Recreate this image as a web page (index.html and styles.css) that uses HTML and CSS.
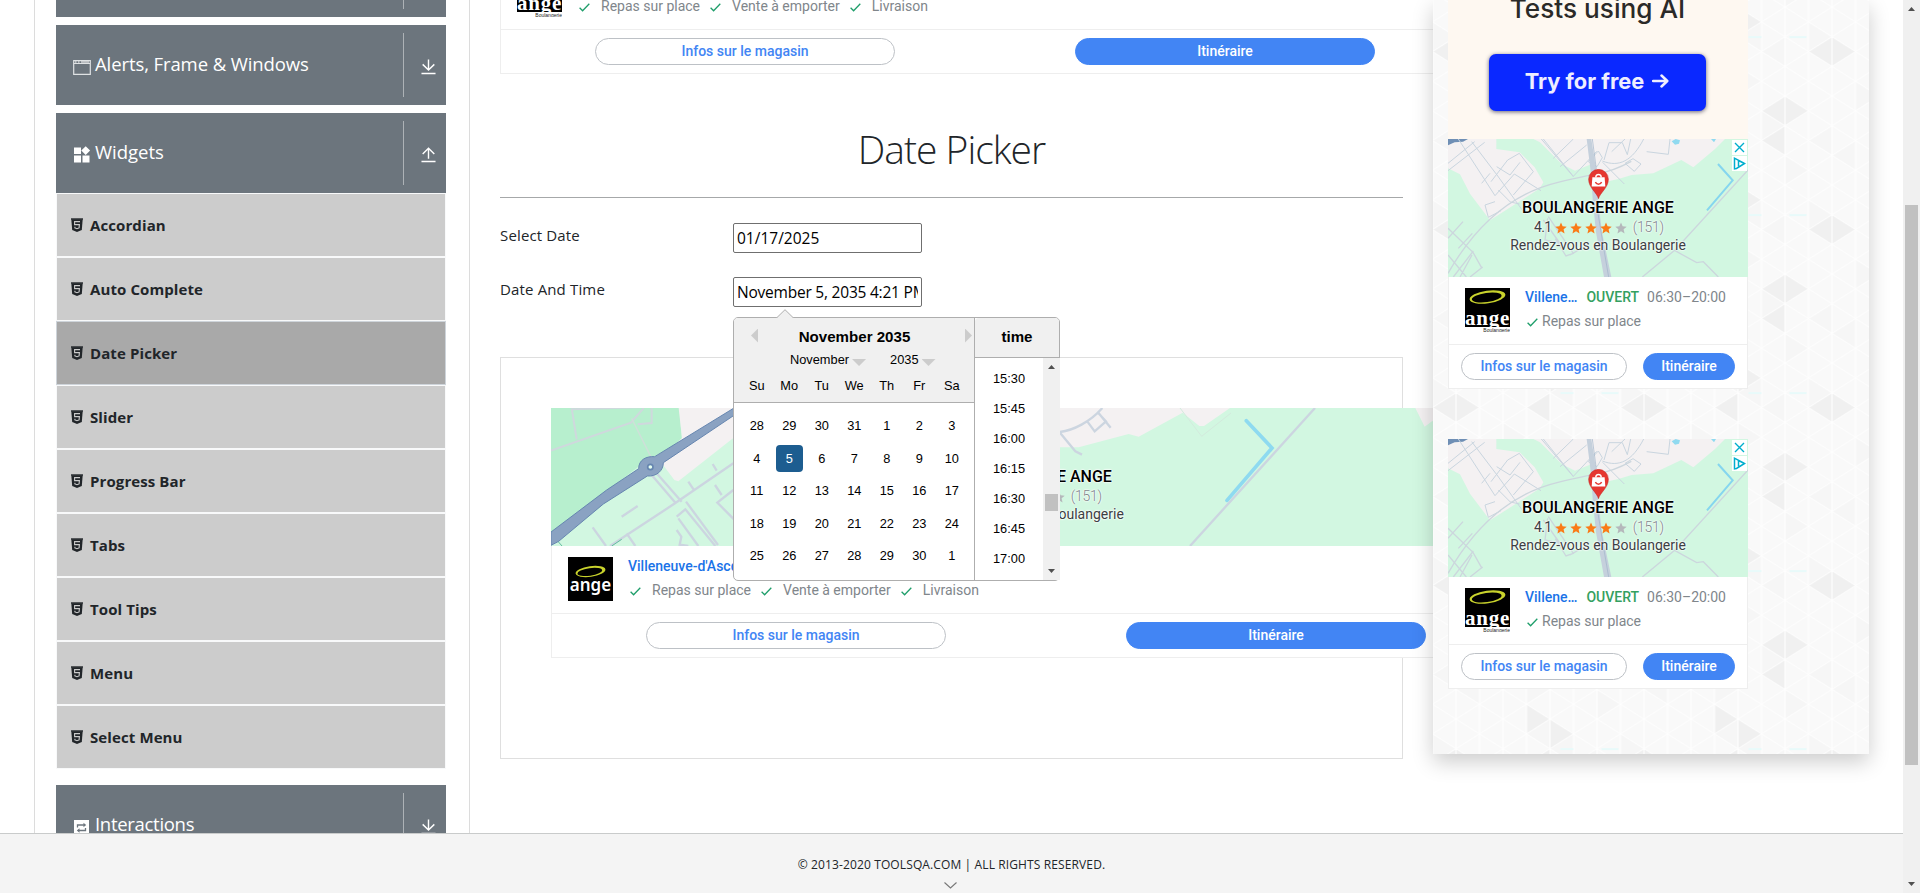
FILE: index.html
```html
<!DOCTYPE html>
<html lang="en">
<head>
<meta charset="utf-8">
<title>Date Picker</title>
<link rel="stylesheet" href="styles.css">
</head>
<body>
<svg class="defs" width="0" height="0" aria-hidden="true">
  <symbol id="html5" viewBox="0 0 12 14"><path fill="currentColor" fill-opacity=".7" d="M0 0h12v2H0z"/><path fill="currentColor" d="M.3 1.2h11.4L10.8 12 6 14 1.200 12z"/><path d="M9 3.600H3.600v3H8.400L8.100 9.900 6 10.700 3.900 9.900V8.800" fill="none" stroke="#ccc" stroke-width="1.100"/></symbol>
  <symbol id="down" viewBox="0 0 16 16"><path d="M8 0v11M1.800 5.200 8 11.300l6.200-6.100M.5 15h15" fill="none" stroke="#fff" stroke-width="1.500"/></symbol>
  <symbol id="up" viewBox="0 0 16 16"><path d="M8 12V1M1.800 7 8 .9 14.200 7M.5 15h15" fill="none" stroke="#fff" stroke-width="1.500"/></symbol>
  <symbol id="check" viewBox="0 0 11 9"><path d="M.6 4.700 3.600 7.700 10.300.8" fill="none" stroke="#1e9e6a" stroke-width="1.300"/></symbol>
  <symbol id="star" viewBox="0 0 24 24"><path fill="currentColor" d="M12 1l3.200 7.600 8.300.7-6.300 5.400 1.900 8.100L12 18.500l-7.100 4.300 1.900-8.100L.5 9.300l8.300-.7z"/></symbol>
  <symbol id="ring" viewBox="0 0 38 16"><g transform="rotate(-8 19 8)"><ellipse cx="19" cy="8" rx="18.500" ry="6.500" fill="#c9d32c"/><ellipse cx="18.100" cy="8.400" rx="15.400" ry="4.700" fill="#000"/></g></symbol>
  <symbol id="pin" viewBox="0 0 60 88"><path fill="#e53730" stroke="#c5221f" stroke-width="1.500" d="M30 87C26 70 1 55 1 30a29 29 0 0 1 58 0C59 55 34 70 30 87z"/><path fill="#fff" d="M12 24h36l2 27H10z"/><path d="M22 25c0-12 16-12 16 0" fill="none" stroke="#fff" stroke-width="4"/><path d="M21 38c3 9 15 9 18 0" fill="none" stroke="#e53730" stroke-width="4"/></symbol>
  <symbol id="town" viewBox="84 417 900 414">
    <path fill="#d2f7e1" d="M84 417h900v414H84z"/>
    <path fill="#f4f1f2" d="M84 505L84 430l60-13h85v30l70 10 45 45 26 45-10 18-150 96-60-80-30-58zM340 417h575l-30 30-65 55-36-22-84 40-65 5-40 12-30 7-55-50-45 18-40-20-65-65z"/>
    <path fill="#6f8fb5" d="M84 417h60l-15 8-25 2-20 9z"/>
    <path fill="#90daf0" d="M755 424l12-7 13 4-3 10-12 3zM873 417h15l-6 10z"/>
    <g fill="none" stroke="#c9d5df" stroke-width="3">
      <path d="M84 490l80-65M84 512l110-85M155 425l76 100 85 118M115 417l110 170M225 587l58-65 80 50M213 545l50-65 35-20 42 55-60 70M230 500l40 25 30-38M185 550l25-30M235 570l36 36 28 6M225 605l-30 10 10 37 38-20M370 417l90 112 70-75M460 530l-96-113M420 500l80-65M400 475l60-58M505 485l30-32 12 20-16 27zM552 480l15-52h40l15 36 10-47M575 455l40-38M548 487l65 65M547 483c50 20 90 0 124-66M615 490l28 24 20-22-24-16zM680 455l65 8 5-46"/>
    </g>
    <g fill="none" stroke="#ccd6dd" stroke-width="4"><path d="M84 820c80-140 190-240 330-273 50-12 80-18 120-27 40-5 70-20 100-36"/><path d="M984 510L765 750l-98 81M765 752l65 36 20-3 45 46M84 685l75 72 27 48M84 715l45-50M115 745l42-45M120 831l36-66M100 831l60-78M150 831l38-30M84 765l55 66M370 660l50 70-45-10 8-65M385 650l75 110-22 8-32-52M450 765l38-22"/></g>
    <path fill="#c5d0dc" d="M500 417h14l14 90 6 90 12 100 28 134h-22l-24-134-10-100-5-75z"/>
    <path d="M534 640l18 110 14 81M517 417l12 90" fill="none" stroke="#9fb3c8" stroke-width="2"/>
    <path d="M894 492l44 49-77 90" fill="none" stroke="#85d6ef" stroke-width="6"/>
  </symbol>
  <symbol id="region" viewBox="213 324 2910 414">
    <path fill="#d2f7e1" d="M213 324h2910v414H213z"/>
    <path fill="#b7efce" d="M213 324h385l8 100-110 60-283 220z"/>
    <path fill="#f4f1f2" d="M596 324h400l-100 20-136 70-165 130-12-4-45-60 68-66zM1740 324h510l-78 54h-14l-50-40-132 72-30-8-150 40h-60zM2806 324h200l-150 40-22 16z"/>
    <g fill="none" stroke="#cfd8dd" stroke-width="6"><path d="M213 452l240-84 38-44M290 418l-15-94M275 328l205-6M515 324v45l-42 4"/></g>
    <path d="M455 355l60 120" fill="none" stroke="#cfdfd9" stroke-width="4"/>
    <g fill="none" stroke="#ccd5e0" stroke-width="7"><path d="M760 490L585 610 390 738M530 520l75 85M515 525l70 82M425 650l48-32M625 545l16 24M698 492l12 20M705 555l20 30M760 570l-48 38 50 50M338 682l40 56M440 700l26 38M595 655l60 83M590 650l26-22 90 110M618 605l96 130M590 690l14 20-5 24 26 4M2505 324L2130 738M1740 396c40-5 90-30 127-72M1820 362l24 32 34-30-24-26M1855 338l37 45M1740 398l46 56 20 10"/></g>
    <path d="M395 738l30-20M232 722l14 16" stroke="#63bd9f" stroke-width="3"/>
    <path fill="#8aa2c2" stroke="#6686b0" stroke-width="3" d="M213 696L380 570l96-64c0-26 22-38 48-36L762 324h25L762 346 550 488c0 24-20 42-48 40L370 612 236 724l-23 12z"/>
    <circle cx="511" cy="501" r="8" fill="#e5fff0" stroke="#6686b0" stroke-width="5"/>
    <path d="M2100 324l65 85 88-70" fill="none" stroke="#d3eadd" stroke-width="3"/>
    <path d="M2299 362l77 82-135 157" fill="none" stroke="#8edaf0" stroke-width="11" stroke-linecap="round"/>
  </symbol>
</svg>

<div class="page">
  <div class="view">
    <div class="body">
      <nav class="sidebar">
        <div class="head"><span class="head-title"></span><span class="head-toggle"></span></div>
        <div class="head">
          <span class="head-title"><svg class="head-icon" viewBox="0 0 18 18"><path d="M.7 2.700h16.600v13.600H.7zM.7 5.500h16.600" fill="none" stroke="#dfe2e4" stroke-width="1.200"/><path d="M2 4h1.500M5 4h1.500M8 4h8" stroke="#fff" stroke-width="1"/></svg><b class="t-alerts">Alerts, Frame &amp; Windows</b></span>
          <span class="head-toggle"><svg class="arrow"><use href="#down"/></svg></span>
        </div>
        <div class="head open">
          <span class="head-title"><svg class="head-icon" viewBox="0 0 18 18"><path fill="#fff" d="M1 1.500h7V8H1zM1 9.500h7v7H1zM9.500 9.500h7v7h-7zM12.700.2l4.400 4.400-4.400 4.400-4.400-4.400z"/></svg><b class="t-widgets">Widgets</b></span>
          <span class="head-toggle"><svg class="arrow"><use href="#up"/></svg></span>
        </div>
        <ul class="menu">
          <li><svg><use href="#html5"/></svg>Accordian</li>
          <li><svg><use href="#html5"/></svg>Auto Complete</li>
          <li class="active"><svg><use href="#html5"/></svg>Date Picker</li>
          <li><svg><use href="#html5"/></svg>Slider</li>
          <li><svg><use href="#html5"/></svg>Progress Bar</li>
          <li><svg><use href="#html5"/></svg>Tabs</li>
          <li><svg><use href="#html5"/></svg>Tool Tips</li>
          <li><svg><use href="#html5"/></svg>Menu</li>
          <li><svg><use href="#html5"/></svg>Select Menu</li>
        </ul>
        <div class="head">
          <span class="head-title"><svg class="head-icon" viewBox="0 0 18 18"><path fill="#fff" d="M1 2h15v15H1z"/><path d="M4.500 9.500V7h7M12.500 10v2.500h-7" fill="none" stroke="#6c757d" stroke-width="1.300"/><path fill="#6c757d" d="M10.500 4.700 13.200 7l-2.700 2.300zM6.500 10.200 3.800 12.500l2.700 2.300z"/></svg><b class="t-inter">Interactions</b></span>
          <span class="head-toggle"><svg class="arrow"><use href="#down"/></svg></span>
        </div>
      </nav>

      <main class="content">
        <section class="ad wide first">
          <svg class="map"><use href="#region"/></svg>
          <div class="info">
            <div class="logo cut"><svg><use href="#ring"/></svg><span>ange</span><small>Boulangerie</small></div>
            <div class="facts">
              <p class="place"><a>Villeneuve-d'Ascq</a></p>
              <p class="tags"><svg><use href="#check"/></svg><span>Repas sur place</span><svg><use href="#check"/></svg><span>Vente à emporter</span><svg><use href="#check"/></svg><span>Livraison</span></p>
            </div>
          </div>
          <div class="actions"><a class="btn ghost">Infos sur le magasin</a><a class="btn solid">Itinéraire</a></div>
        </section>

        <h1>Date Picker</h1>

        <div class="field"><label>Select Date</label><div class="input i-date">01/17/2025</div></div>
        <div class="field">
          <label class="l-time">Date And Time</label>
          <div class="anchor">
            <div class="input i-time"><span>November 5, 2035 4:21 PM</span></div>
            <div class="picker">
              <svg class="tip" viewBox="0 0 18 9"><path d="M.5 9 9 .7 17.500 9" fill="#f0f0f0" stroke="#aeaeae"/></svg>
              <div class="month">
                <div class="month-head">
                  <div class="current"><i class="prev"></i><strong>November 2035</strong><i class="next"></i></div>
                  <div class="selects"><span>November<i></i></span><span>2035<i></i></span></div>
                  <div class="week"><span>Su</span><span>Mo</span><span>Tu</span><span>We</span><span>Th</span><span>Fr</span><span>Sa</span></div>
                </div>
                <div class="days">
                  <span>28</span><span>29</span><span>30</span><span>31</span><span>1</span><span>2</span><span>3</span>
                  <span>4</span><span class="on"><em>5</em></span><span>6</span><span>7</span><span>8</span><span>9</span><span>10</span>
                  <span>11</span><span>12</span><span>13</span><span>14</span><span>15</span><span>16</span><span>17</span>
                  <span>18</span><span>19</span><span>20</span><span>21</span><span>22</span><span>23</span><span>24</span>
                  <span>25</span><span>26</span><span>27</span><span>28</span><span>29</span><span>30</span><span>1</span>
                </div>
              </div>
              <div class="time">
                <div class="time-head">time</div>
                <div class="time-body">
                  <ul><li>15:30</li><li>15:45</li><li>16:00</li><li>16:15</li><li>16:30</li><li>16:45</li><li>17:00</li></ul>
                  <div class="bar small"><i class="tri-up"></i><i class="thumb"></i><i class="tri-down"></i></div>
                </div>
              </div>
            </div>
          </div>
        </div>

        <div class="frame">
          <section class="ad wide">
            <div class="mapbox">
              <svg class="map"><use href="#region"/></svg>
              <div class="caption">
                <strong>BOULANGERIE ANGE</strong>
                <p class="rating">4.1 <svg><use href="#star"/></svg><svg><use href="#star"/></svg><svg><use href="#star"/></svg><svg><use href="#star"/></svg><svg class="off"><use href="#star"/></svg><small>(151)</small></p>
                <p>Rendez-vous en Boulangerie</p>
              </div>
            </div>
            <div class="info">
              <div class="logo full"><svg><use href="#ring"/></svg><span>ange</span></div>
              <div class="facts">
                <p class="place"><a>Villeneuve-d'Ascq</a></p>
                <p class="tags"><svg><use href="#check"/></svg><span>Repas sur place</span><svg><use href="#check"/></svg><span>Vente à emporter</span><svg><use href="#check"/></svg><span>Livraison</span></p>
              </div>
            </div>
            <div class="actions"><a class="btn ghost">Infos sur le magasin</a><a class="btn solid">Itinéraire</a></div>
          </section>
        </div>
      </main>

      <aside class="rail">
        <svg class="pattern" width="436" height="754">
          <defs>
            <pattern id="tri" width="188" height="178" patternUnits="userSpaceOnUse" patternTransform="translate(-.5 7.100)">
              <path fill="#f9f9f9" d="M0 0h188v178H0z"/>
              <g fill="#f6f6f6"><path d="M0 14.800v29.700L23.500 29.700zM70.500 59.300V89L94 74.200zM117.500 0v29.700L94 14.800zM141 103.800v29.700l23.500-14.800zM23.500 118.700v29.600L0 133.500zM94 133.500v29.700l23.500-14.900zM47 74.200v29.600L70.500 89zM164.500 148.300V178L188 163.200zM47 163.200v-29.700L23.500 148.300zM164.500 29.700v29.600L141 44.500zM117.500 59.300V89L141 74.200zM141 14.800v29.700L117.500 29.700z"/></g>
              <g fill="#f0f0f0"><path d="M164.500 89l23.500 14.800-23.500 14.900L141 103.800zM164.500 118.700v29.600L141 133.500zM23.500 29.700L47 44.500 23.500 59.300 0 44.500zM94 14.800v-29.600L117.500 0zM94 163.200v29.600l23.500-14.800zM117.500 0v29.700L141 14.800zM117.500 29.700v29.600L94 44.500z"/></g>
              <path fill="none" stroke="#fff" stroke-width="1" d="M0 0v178M23.500 0v178M47 0v178M70.500 0v178M94 0v178M117.500 0v178M141 0v178M164.500 0v178M188 0v178M0 -103.800L188 14.800M0 -74.200L188 44.500M0 -44.500L188 74.200M0 -14.800L188 103.800M0 14.800L188 133.500M0 44.500L188 163.200M0 74.200L188 192.800M0 103.800L188 222.500M0 133.500L188 252M0 163.200L188 281.800M0 14.800L188 -103.800M0 44.500L188 -74.200M0 74.200L188 -44.500M0 103.800L188 -14.800M0 133.500L188 14.800M0 163.200L188 44.500M0 192.800L188 74.200M0 222.500L188 103.800M0 252L188 133.500M0 281.800L188 163.200"/>
              <path d="M128 30h13M169 30h17" stroke="#e8fafa" stroke-width="2"/>
            </pattern>
          </defs>
          <rect width="436" height="754" fill="url(#tri)"/>
        </svg>
        <section class="promo">
          <p>Tests using AI</p>
          <a>Try for free <svg viewBox="0 0 17 14"><path d="M1 7h14M9.500 1.500 15.300 7l-5.800 5.500" fill="none" stroke="#eef" stroke-width="2.500" stroke-linecap="round" stroke-linejoin="round"/></svg></a>
        </section>
        <section class="ad narrow">
          <div class="mapbox">
            <svg class="map"><use href="#town"/></svg>
            <svg class="pin"><use href="#pin"/></svg>
            <div class="choices"><svg viewBox="0 0 15 15"><path d="M3 3l9 9M12 3l-9 9" stroke="#00aecd" stroke-width="1.400"/></svg><svg viewBox="0 0 15 15"><path d="M6.500 10.200V4.500L12.500 7.500 4.500 12.500 2.500 12.800V2.200L12.500 7.500" fill="none" stroke="#00aecd" stroke-width="1.500"/></svg></div>
            <div class="caption">
              <strong>BOULANGERIE ANGE</strong>
              <p class="rating">4.1 <svg><use href="#star"/></svg><svg><use href="#star"/></svg><svg><use href="#star"/></svg><svg><use href="#star"/></svg><svg class="off"><use href="#star"/></svg><small>(151)</small></p>
              <p>Rendez-vous en Boulangerie</p>
            </div>
          </div>
          <div class="info">
            <div class="logo cut"><svg><use href="#ring"/></svg><span>ange</span><small>Boulangerie</small></div>
            <div class="facts">
              <p class="place"><a>Villene…</a><b>OUVERT</b><span>06:30–20:00</span></p>
              <p class="tags"><svg><use href="#check"/></svg><span>Repas sur place</span></p>
            </div>
          </div>
          <div class="actions"><a class="btn ghost">Infos sur le magasin</a><a class="btn solid">Itinéraire</a></div>
        </section>
        <section class="ad narrow last">
          <div class="mapbox">
            <svg class="map"><use href="#town"/></svg>
            <svg class="pin"><use href="#pin"/></svg>
            <div class="choices"><svg viewBox="0 0 15 15"><path d="M3 3l9 9M12 3l-9 9" stroke="#00aecd" stroke-width="1.400"/></svg><svg viewBox="0 0 15 15"><path d="M6.500 10.200V4.500L12.500 7.500 4.500 12.500 2.500 12.800V2.200L12.500 7.500" fill="none" stroke="#00aecd" stroke-width="1.500"/></svg></div>
            <div class="caption">
              <strong>BOULANGERIE ANGE</strong>
              <p class="rating">4.1 <svg><use href="#star"/></svg><svg><use href="#star"/></svg><svg><use href="#star"/></svg><svg><use href="#star"/></svg><svg class="off"><use href="#star"/></svg><small>(151)</small></p>
              <p>Rendez-vous en Boulangerie</p>
            </div>
          </div>
          <div class="info">
            <div class="logo cut"><svg><use href="#ring"/></svg><span>ange</span><small>Boulangerie</small></div>
            <div class="facts">
              <p class="place"><a>Villene…</a><b>OUVERT</b><span>06:30–20:00</span></p>
              <p class="tags"><svg><use href="#check"/></svg><span>Repas sur place</span></p>
            </div>
          </div>
          <div class="actions"><a class="btn ghost">Infos sur le magasin</a><a class="btn solid">Itinéraire</a></div>
        </section>
      </aside>
    </div>
    <footer><span>© 2013-2020 TOOLSQA.COM | ALL RIGHTS RESERVED.</span><svg viewBox="0 0 13 7"><path d="M.5.5l6 5.500 6-5.500" fill="none" stroke="#777" stroke-width="1.100"/></svg></footer>
  </div>
  <div class="bar"><i class="tri-up"></i><i class="thumb"></i><i class="tri-down"></i></div>
</div>
</body>
</html>
```
FILE: styles.css
```css
* { box-sizing: border-box; }
body { margin: 0; background: #fff; color: #212529; font: 15px/24px "Open Sans", "Noto Sans", sans-serif; overflow: hidden; }
p, ul, h1 { margin: 0; padding: 0; }
ul { list-style: none; }
svg { display: block; flex: none; }
.defs { position: absolute; }

.page { display: flex; height: 893px; }
.view { width: 1903px; display: flex; flex-direction: column; }
.body { display: flex; align-items: flex-start; height: 833px; overflow: hidden; }

/* sidebar */
.sidebar { width: 436px; height: 833px; margin-left: 34px; padding: 0 23px 0 21px; border: solid #dcdcdc; border-width: 0 1px; flex: none; }
.head { height: 80px; margin-bottom: 8px; padding: 8px 0; display: flex; background: #6c757d; color: #fff; }
.head:first-child { margin-top: -63px; }
.head.open { margin-bottom: 0; }
.head-title { width: 347px; padding-left: 17px; display: flex; align-items: center; gap: 4px; }
.head-title b { font-size: 18.500px; font-weight: 400; line-height: 30px; padding-bottom: 3px; }
.head-icon { width: 18px; height: 18px; margin-top: 4px; }
.head-toggle { flex: 1; border-left: 1px solid #adb2b6; display: flex; align-items: center; justify-content: center; padding: 4px 0 0 6px; }
.arrow { width: 15px; height: 16px; }
.t-alerts { letter-spacing: -.1px; }
.t-inter { letter-spacing: -.3px; }
.menu { margin-bottom: 16px; }
.menu li { height: 64px; padding: 0 14px; display: flex; align-items: center; gap: 7px; border: 1px solid #f8f9fa; background: #ccc; font-weight: 700; font-size: 15px; letter-spacing: .1px; }
.menu li svg { width: 12px; height: 14px; }
.menu li.active { background: #a9a9a9; border-color: #ced4da; }

/* main column */
.content { width: 903px; margin-left: 30px; flex: none; }
h1 { margin-top: 45px; height: 79px; border-bottom: 1px solid #a6a8a9; font-size: 39px; font-weight: 300; line-height: 60px; text-align: center; letter-spacing: -1px; }
.field { display: flex; height: 30px; }
h1 + .field { margin: 25px 0 24px; }
.field label { width: 233px; letter-spacing: .15px; }
.input { width: 189px; height: 30px; border: 1px solid #6f6f6f; border-radius: 2px; padding: 0 3px; background: #fff; color: #000; font-size: 15.500px; line-height: 28px; white-space: nowrap; }
.i-time { letter-spacing: -.22px; }
.input span { display: block; overflow: hidden; }
.anchor { position: relative; z-index: 2; height: 30px; }

/* calendar popup */
.picker { position: absolute; left: 0; top: 40px; width: 327px; height: 264px; display: flex; border: 1px solid #aeaeae; border-radius: 5px; background: #fff; color: #000; font: 12.800px/20px "Liberation Sans", sans-serif; }
.tip { position: absolute; left: 42px; top: -9px; width: 18px; height: 9px; }
.month { flex: none; width: 241px; border-right: 1px solid #aeaeae; }
.month-head { height: 85px; background: #f0f0f0; border-bottom: 1px solid #aeaeae; border-radius: 4px 0 0; }
.current { display: flex; align-items: center; justify-content: space-between; padding: 9px 2px 0 17px; height: 28px; font-size: 15.100px; }
.prev, .next { width: 7px; height: 14px; background: #ccc; margin-top: -2px; }
.prev { clip-path: polygon(100% 0, 100% 100%, 0 50%); }
.next { clip-path: polygon(0 0, 100% 50%, 0 100%); }
.current strong { position: relative; left: -7px; }
.selects { display: flex; gap: 24px; padding-left: 56px; height: 28px; align-items: center; }
.selects span { display: flex; align-items: center; gap: 3px; }
.selects i { width: 14px; height: 7px; margin-top: 5px; background: #ccc; clip-path: polygon(0 0, 100% 0, 50% 100%); }
.week, .days { display: grid; grid-template-columns: repeat(7, 32.500px); padding-left: 6.500px; text-align: center; }
.week { padding-top: 2px; }
.days { padding-top: 6px; grid-auto-rows: 32.500px; line-height: 33px; }
.on { display: flex; align-items: center; justify-content: center; }
.on em { width: 27px; height: 27px; margin-top: 1px; border-radius: 4px; background: #1d5d90; color: #fff; font: 12.800px/27px "Liberation Sans", sans-serif; }
.time { flex: none; width: 84px; }
.time-head { height: 40px; background: #f0f0f0; border-bottom: 1px solid #aeaeae; border-radius: 4px 4px 0 0; text-align: center; font: bold 15.100px/38px "Liberation Sans", sans-serif; }
.time-body { display: flex; height: 222px; width: 85px; overflow: hidden; }
.time-body ul { flex: 1; padding-top: 6px; text-align: center; line-height: 30px; }

/* scrollbars */
.bar { width: 17px; flex: none; background: #f0f0f0; position: relative; padding: 0 2px; }
.bar .thumb { display: block; width: 13px; height: 560px; margin-top: 205px; background: #c1c1c1; }
.bar.small .thumb { height: 17px; margin-top: 136px; }
.tri-up, .tri-down { position: absolute; left: 5px; width: 7px; height: 4px; background: #505050; }
.tri-up { top: 7px; clip-path: polygon(50% 0, 100% 100%, 0 100%); }
.tri-down { bottom: 7px; clip-path: polygon(0 0, 100% 0, 50% 100%); }

.frame { height: 402px; margin-top: 50px; padding: 50px; border: 1px solid #dfdfdf; }

/* ads */
.ad { height: 250px; position: relative; background: #fff; font: 14px/20px Roboto, sans-serif; color: #80868b; }
.ad.wide { width: 970px; }
.ad.first { margin-top: -176px; }
.mapbox { position: relative; height: 138px; }
.map { width: 100%; height: 138px; }
.pin { position: absolute; left: 140px; top: 30px; width: 21px; height: 30px; }
.choices { position: absolute; right: 1px; top: 1px; display: grid; gap: 1px; }
.choices svg { width: 15px; height: 15px; background: #fff; }
.caption { position: absolute; left: 0; right: 0; top: 59px; text-align: center; line-height: 17px; color: #3c4043; text-shadow: 0 0 2px #fff, 0 0 2px #fff, 0 0 2px #fff; }
.caption strong { display: block; font-size: 16px; line-height: 20px; font-weight: 500; color: #000; margin-bottom: 1px; }
.rating { display: flex; justify-content: center; align-items: center; gap: 3px; padding-left: 2px; margin-bottom: 1px; letter-spacing: -.6px; }
.rating svg { width: 12px; height: 12px; color: #fa7b17; }
.rating svg.off { color: #b5b8bb; }
.rating small { font-size: 14px; font-weight: 300; color: #80868b; margin-left: 3px; letter-spacing: -.2px; }
.info { height: 68px; display: flex; gap: 15px; padding: 11px 0 0 16px; border: solid #eee; border-width: 0 1px 1px; }
.logo { width: 45px; height: 44px; background: #000; color: #fff; overflow: hidden; text-align: center; flex: none; }
.logo svg { width: 31px; height: 13px; margin: 8px 0 0 7px; }
.logo span { display: block; font: 600 17px/16px "Noto Sans", sans-serif; margin-top: -1px; }
.logo.cut { background: linear-gradient(#000 39px, #fff 39px); }
.logo.cut svg { width: 37px; height: 16px; margin: 1px 0 0 4px; }
.logo.cut span { font: bold 21px/20px "Liberation Serif", serif; margin: 3px -3px 0; letter-spacing: .8px; }
.logo.cut small { display: block; font: 5px/6px "Liberation Sans", sans-serif; color: #222; text-align: right; margin-top: -1px; }
.place a { color: #1a73e8; font-weight: 500; }
.place { height: 23px; line-height: 18px; display: flex; gap: 9px; }
.place b { color: #34a060; font-weight: 500; }
.place span { margin-left: -1px; }
.tags { display: flex; align-items: center; height: 20px; }
.tags svg { width: 11px; height: 9px; margin: 3px 11px 0 2px; }
.tags span { margin-right: 8px; }
.narrow .tags svg { margin-right: 4px; }
.actions { height: 44px; border: solid #eee; border-width: 0 1px 1px; padding: 8px 4px; display: grid; grid-template-columns: 1fr 1fr; justify-items: center; }
.btn { width: 300px; height: 27px; border-radius: 14px; text-align: center; font-weight: 500; line-height: 25px; border: 1px solid #bdc1c6; color: #4285f4; }
.btn.solid { background: #4285f4; border-color: #4285f4; color: #fff; }
.narrow .actions { display: flex; justify-content: space-between; padding: 8px 12px; }
.narrow .ghost { width: 166px; }
.narrow .solid { width: 92px; }

/* right rail */
.rail { position: relative; z-index: 3; width: 436px; height: 754px; margin-left: 30px; padding-left: 15px; flex: none; background: #fafafa; box-shadow: 0 8px 20px rgba(0, 0, 0, .2); }
.pattern { position: absolute; left: 0; top: 0; }
.rail .ad, .promo { position: relative; width: 300px; }
.ad.last { margin-top: 50px; }
.promo { height: 139px; background: #fef8f1; font-family: Inter, sans-serif; text-align: center; overflow: hidden; }
.promo p { margin-top: -8px; height: 62px; padding-right: 1px; font-size: 26.200px; line-height: 34px; font-weight: 500; color: #2b2a28; }
.promo a { display: flex; align-items: center; justify-content: center; gap: 8px; width: 217px; height: 57px; margin: 0 0 0 41px; padding: 0 1px 4px 0; border-radius: 7px; background: #0a28ff; color: #eef; font-size: 21.800px; font-weight: 700; box-shadow: 0 1px 4px rgba(0, 0, 40, .6); }
.promo a svg { width: 17px; height: 14px; }

footer { height: 60px; border-top: 1px solid #c9cbcb; background: #f4f4f4; display: flex; flex-direction: column; align-items: center; padding-top: 20px; font-size: 12px; line-height: 21px; letter-spacing: .12px; }
footer svg { width: 13px; height: 7px; margin: 7px 2px 0 0; }
```
